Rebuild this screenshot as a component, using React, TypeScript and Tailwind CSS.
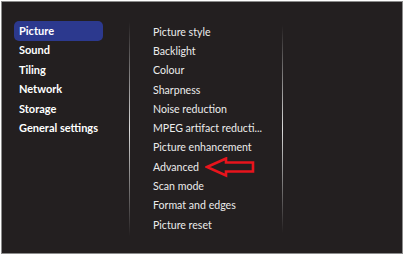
import React from "react";

const left = ["Picture", "Sound", "Tiling", "Network", "Storage", "General settings"];
const right = [
  "Picture style",
  "Backlight",
  "Colour",
  "Sharpness",
  "Noise reduction",
  "MPEG artifact reducti...",
  "Picture enhancement",
  "Advanced",
  "Scan mode",
  "Format and edges",
  "Picture reset",
];

export default function App() {
  return (
    <div className="w-[406px] h-[258px] bg-white pt-[1px] pl-[1px]" style={{ fontFamily: "Lato, 'Open Sans', sans-serif" }}>
      <div className="w-[402px] h-[253px] border border-[#8c8c8c] bg-[#231f20] flex">
        <div className="w-[127px] pl-[12px] pt-[19px] flex flex-col">
          {left.map((t, i) =>
            i === 0 ? (
              <div key={t} className="w-[89px] h-[20px] rounded-[5px] bg-[#2c398e] flex items-center pl-[5px] text-white font-bold text-[11px]">
                {t}
              </div>
            ) : (
              <div key={t} className="h-[19.4px] flex items-center pl-[5px] text-white font-bold text-[11px]">
                {t}
              </div>
            )
          )}
        </div>
        <div className="w-px mt-[20px] mb-[17px] bg-gradient-to-b from-transparent via-[#dadada] to-transparent" />
        <div className="w-[152px] pl-[23px] pt-[21px] flex flex-col">
          {right.map((t) => (
            <div key={t} className="h-[19.3px] flex items-center text-[#ececec] text-[10.6px] whitespace-nowrap relative">
              {t}
              {t === "Advanced" && (
                <svg className="absolute left-[52px] top-[-1px]" width="52" height="22" viewBox="0 0 52 22">
                  <polygon
                    points="2,10 21,1.5 21,5.5 48,5.5 48,14.5 21,14.5 21,18.5"
                    fill="none"
                    stroke="#e8141c"
                    strokeWidth="2.6"
                    strokeLinejoin="miter"
                  />
                </svg>
              )}
            </div>
          ))}
        </div>
        <div className="w-px mt-[23px] mb-[20px] bg-gradient-to-b from-transparent via-[#dadada] to-transparent" />
      </div>
    </div>
  );
}
